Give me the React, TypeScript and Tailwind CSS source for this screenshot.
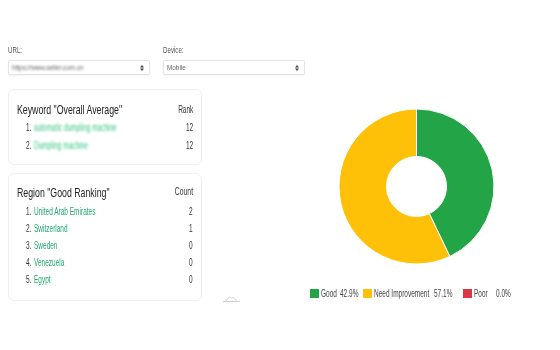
import type { ReactNode } from 'react'

const FONT = '"Liberation Sans", Arial, sans-serif'

const keywords = [
  { name: 'automatic dumpling machine', rank: 12 },
  { name: 'Dumpling machine', rank: 12 },
]

const regions = [
  { name: 'United Arab Emirates', count: 2 },
  { name: 'Switzerland', count: 1 },
  { name: 'Sweden', count: 0 },
  { name: 'Venezuela', count: 0 },
  { name: 'Egypt', count: 0 },
]

// condensed text: the screenshot uses a narrow face we don't have
function N({ children, right, className = '' }: { children: ReactNode; right?: boolean; className?: string }) {
  return (
    <span className={`inline-block whitespace-nowrap scale-x-[0.65] ${right ? 'origin-right' : 'origin-left'} ${className}`}>
      {children}
    </span>
  )
}

function Arrows() {
  return (
    <svg width="4" height="6" viewBox="0 0 4 6">
      <path d="M0 2.4 L2 0 L4 2.4 Z M0 3.6 L2 6 L4 3.6 Z" fill="#444" />
    </svg>
  )
}

function Select({ value, blurred }: { value: string; blurred?: boolean }) {
  return (
    <div className="flex h-[15px] w-[142px] items-center justify-between rounded-[2px] border border-[#e4e4e4] bg-white pl-[3px] pr-[5px] shadow-[0_1px_2px_rgba(0,0,0,0.05)]">
      <span className={`inline-block origin-left scale-x-[0.85] whitespace-nowrap text-[7.5px] text-[#666] ${blurred ? 'blur-[1px]' : ''}`}>
        {value}
      </span>
      <Arrows />
    </div>
  )
}

function Donut() {
  const cx = 77.5
  const cy = 77.5
  const R = 77.5
  const r = 30
  const a = 0.429 * Math.PI * 2
  const ox = cx + R * Math.sin(a)
  const oy = cy - R * Math.cos(a)
  const ix = cx + r * Math.sin(a)
  const iy = cy - r * Math.cos(a)
  const green = `M ${cx} ${cy - R} A ${R} ${R} 0 0 1 ${ox} ${oy} L ${ix} ${iy} A ${r} ${r} 0 0 0 ${cx} ${cy - r} Z`
  const yellow = `M ${ox} ${oy} A ${R} ${R} 0 1 1 ${cx} ${cy - R} L ${cx} ${cy - r} A ${r} ${r} 0 1 0 ${ix} ${iy} Z`
  return (
    <svg width="155" height="155" viewBox="0 0 155 155" className="overflow-visible">
      <path d={yellow} fill="#ffc107" stroke="#fff" strokeWidth="1" />
      <path d={green} fill="#23a547" stroke="#fff" strokeWidth="1" />
    </svg>
  )
}

function Row({ n, name, value, h, nameClass }: { n: number; name: string; value: number; h: string; nameClass: string }) {
  return (
    <div className={`flex items-center text-[10px] ${h}`}>
      <span className="w-[14px] shrink-0 text-right text-[#333]"><N right>{n}.</N></span>
      <span className={`ml-[2.5px] min-w-0 flex-1 ${nameClass}`}><N>{name}</N></span>
      <N right className="text-[#333]">{value}</N>
    </div>
  )
}

export default function App() {
  return (
    <div className="h-[350px] w-[560px] bg-white pt-[44px]" style={{ fontFamily: FONT }}>
      {/* Filters */}
      <div className="flex gap-[13px] px-[8px]">
        <div>
          <div className="mb-[4px] h-[12px] text-[9.5px] leading-[12px] text-[#555]">
            <N className="scale-x-[0.7]">URL:</N>
          </div>
          <Select value="https://www.seller.com.cn" blurred />
        </div>
        <div>
          <div className="mb-[4px] h-[12px] text-[9.5px] leading-[12px] text-[#555]">
            <N className="scale-x-[0.7]">Device:</N>
          </div>
          <Select value="Mobile" />
        </div>
      </div>

      <div className="mt-[14px] flex">
        {/* Left column */}
        <div className="ml-[8px] flex w-[194px] shrink-0 flex-col gap-[8px]">
          <div className="h-[76px] rounded-[6px] border border-[#efefef] bg-white px-[8px] pt-[11px]">
            <div className="flex h-[16px] items-center">
              <span className="min-w-0 flex-1"><N className="text-[13.5px] text-[#222]">Keyword "Overall Average"</N></span>
              <N right className="text-[10px] text-[#333]">Rank</N>
            </div>
            <div className="mt-[1.5px]">
              {keywords.map((k, i) => (
                <Row key={k.name} n={i + 1} name={k.name} value={k.rank} h="h-[18px]" nameClass="text-[#3cc48a] blur-[1px]" />
              ))}
            </div>
          </div>

          <div className="h-[128px] rounded-[6px] border border-[#efefef] bg-white px-[8px] pt-[10px]">
            <div className="flex h-[16px] items-center">
              <span className="min-w-0 flex-1"><N className="text-[13.5px] text-[#222]">Region "Good Ranking"</N></span>
              <N right className="text-[10.5px] text-[#333]">Count</N>
            </div>
            <div className="mt-[3px]">
              {regions.map((r, i) => (
                <Row key={r.name} n={i + 1} name={r.name} value={r.count} h="h-[17px]" nameClass="text-[#1fa96c]" />
              ))}
            </div>
          </div>
        </div>

        {/* Right column */}
        <div className="flex min-w-0 flex-1 flex-col">
          <div className="ml-[137px] mt-[20px]">
            <Donut />
          </div>
          <div className="mt-[23px] flex h-[12px] items-center text-[10px] text-[#444]">
            <svg width="18" height="6" viewBox="0 0 18 6" className="ml-[21px] mt-[9px] self-start">
              <path d="M0 5.5 H17 M3 5.5 C5 1, 7 0, 8.5 2.5 C10 0.5, 11.5 1.5, 13.5 5.5" fill="none" stroke="#c4c4c4" strokeWidth="0.8" />
            </svg>
            <span className="ml-[69px] size-[9px] bg-[#23a547]" />
            <span className="ml-[2px] w-[19px]"><N>Good</N></span>
            <span className="w-[22.7px]"><N>42.9%</N></span>
            <span className="size-[9px] bg-[#ffc107]" />
            <span className="ml-[2.3px] w-[60px]"><N>Need Improvement</N></span>
            <span className="w-[29px]"><N>57.1%</N></span>
            <span className="size-[9px] bg-[#dc3545]" />
            <span className="ml-[2px] w-[22px]"><N>Poor</N></span>
            <span><N>0.0%</N></span>
          </div>
        </div>
      </div>
    </div>
  )
}
